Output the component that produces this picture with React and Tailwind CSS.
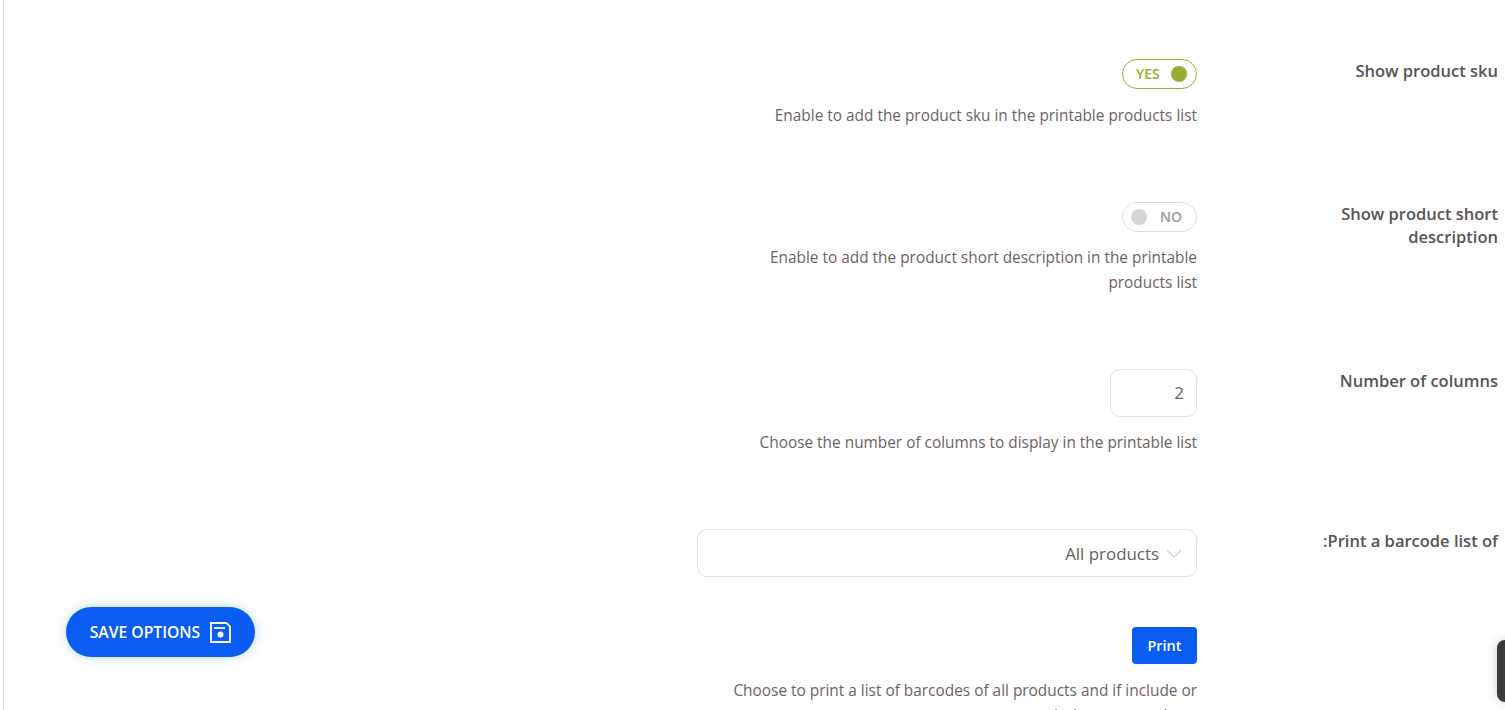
const descClass = "text-[15.4px] leading-[25px] text-[#6d5f66] text-right";
const labelClass = "w-[230px] shrink-0 text-right text-[16.5px] leading-[23px] font-semibold text-[#555]";

function Row({ label, className, children }) {
  return (
    <div dir="rtl" className={`flex ${className}`}>
      <div dir="rtl" className={labelClass}>{label}</div>
      <div className="w-[500px] mr-[71px] shrink-0 flex flex-col items-start">{children}</div>
    </div>
  );
}

function SaveIcon() {
  return (
    <svg width="21" height="21" viewBox="0 0 21 21" fill="none" stroke="white" strokeWidth="1.8">
      <path d="M1 1H16.5L20 4.5V20H1Z" />
      <path d="M4 6H15" />
      <circle cx="10.5" cy="12.5" r="3" fill="white" stroke="none" />
    </svg>
  );
}

export default function App() {
  return (
    <div
      className="relative h-[710px] overflow-hidden bg-white pl-[3px]"
      style={{ fontFamily: '"Open Sans", "Noto Sans", sans-serif' }}
    >
      <div className="h-full border-l border-[#dcdcdc] pr-[7px] pt-[59px]">
        <Row label="Show product sku" className="h-[143px]">
          <div dir="ltr" className="w-[75px] h-[30px] rounded-full border border-[#9aab32] flex items-center justify-between pl-[13px] pr-[9px]">
            <span className="text-[14px] font-semibold text-[#9aab32] -translate-y-px">YES</span>
            <span className="w-[16px] h-[16px] rounded-full bg-[#9aab32]"></span>
          </div>
          <p dir="ltr" className={`${descClass} mt-[14px]`}>Enable to add the product sku in the printable products list</p>
        </Row>

        <Row label="Show product short description" className="h-[167px]">
          <div dir="ltr" className="w-[75px] h-[30px] rounded-full border border-[#dcdcdc] flex items-center justify-between pl-[8px] pr-[14px]">
            <span className="w-[16px] h-[16px] rounded-full bg-[#d6d6d6]"></span>
            <span className="text-[14px] font-semibold text-[#999] -translate-y-px">NO</span>
          </div>
          <p dir="ltr" className={`${descClass} mt-[13px] w-[440px]`}>Enable to add the product short description in the printable products list</p>
        </Row>

        <Row label="Number of columns" className="h-[160px]">
          <div className="w-[87px] h-[48px] rounded-[10px] border border-[#e2e2e2] flex items-center px-[12px] text-[17px] text-[#666]">2</div>
          <p dir="ltr" className={`${descClass} mt-[13px]`}>Choose the number of columns to display in the printable list</p>
        </Row>

        <Row label="Print a barcode list of:" className="h-[98px]">
          <div dir="ltr" className="w-[500px] h-[48px] rounded-[10px] border border-[#e2e2e2] flex items-center justify-end pr-[14px] gap-[7px] text-[16.9px] text-[#5f5f5f]">
            <span className="translate-y-px">All products</span>
            <svg width="16" height="9" viewBox="0 0 16 9" fill="none" stroke="#d4d4d4" strokeWidth="1.5"><path d="M1 1L8 8L15 1" /></svg>
          </div>
        </Row>

        <Row label="" className="h-[100px]">
          <button className="w-[65px] h-[37px] shrink-0 rounded-[4px] bg-[#0b5cf1] text-white text-[14.5px] font-semibold">Print</button>
          <p dir="ltr" className={`${descClass} mt-[14px] w-[500px] shrink-0`}>Choose to print a list of barcodes of all products and if include or exclude some products</p>
        </Row>
      </div>

      <button className="absolute left-[66px] top-[607px] w-[189px] h-[50px] rounded-full bg-[#0b5cf1] text-white text-[15.7px] font-semibold flex items-center justify-center gap-[10px] shadow-[0_0_12px_rgba(60,150,200,0.35)]">
        <span className="translate-y-px">SAVE OPTIONS</span>
        <SaveIcon />
      </button>

      <div className="absolute right-[-20px] top-[640px] w-[28px] h-[62px] rounded-[8px] bg-[#3a3a3a] shadow-[0_0_12px_rgba(0,0,0,0.2)]"></div>
    </div>
  );
}
